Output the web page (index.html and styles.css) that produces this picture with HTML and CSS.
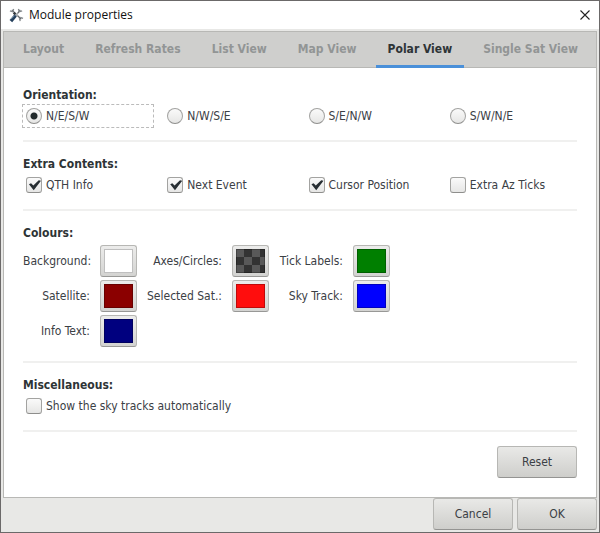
FILE: index.html
```html
<!DOCTYPE html>
<html lang="en">
<head>
<meta charset="utf-8">
<title>Module properties</title>
<link rel="stylesheet" href="styles.css">
</head>
<body>
<div class="window">
  <header class="titlebar">
    <svg class="app-icon" viewBox="0 0 16 16" aria-hidden="true">
      <path d="M3 2l4 4M12 2L9 6M9 8l4 4" stroke="#63676b" stroke-width="1.4" fill="none"/>
      <path d="M1 3l3 1 1-3M10 1l1 3 3-1M11 11l1 3M12 10l3 1" stroke="#83888b" stroke-width="1.3" fill="none"/>
      <path d="M5 5l3 3" stroke="#34383c" stroke-width="2.6"/>
      <path d="M9 6L6 9" stroke="#a9adaf" stroke-width="2"/>
      <path d="M7 8l-5 6" stroke="#243f5c" stroke-width="3.6"/>
      <path d="M6 8l-4 4" stroke="#7493ad" stroke-width="1"/>
    </svg>
    <h1 class="title">Module properties</h1>
    <button class="close" type="button" aria-label="Close">
      <svg viewBox="0 0 10 10" aria-hidden="true"><path d="M0.5 0.5l9 9M9.5 0.5l-9 9" stroke="#222" stroke-width="1.1"/></svg>
    </button>
  </header>

  <main class="notebook">
    <div class="tabs" role="tablist">
      <button class="tab" type="button" role="tab">Layout</button>
      <button class="tab" type="button" role="tab">Refresh Rates</button>
      <button class="tab" type="button" role="tab">List View</button>
      <button class="tab" type="button" role="tab">Map View</button>
      <button class="tab tab-active" type="button" role="tab" aria-selected="true">Polar View</button>
      <button class="tab" type="button" role="tab">Single Sat View</button>
    </div>

    <div class="panel" role="tabpanel">
      <section class="group">
        <h2>Orientation:</h2>
        <div class="options">
          <label class="option option-focus"><input type="radio" name="orientation" checked>N/E/S/W</label>
          <label class="option"><input type="radio" name="orientation">N/W/S/E</label>
          <label class="option"><input type="radio" name="orientation">S/E/N/W</label>
          <label class="option"><input type="radio" name="orientation">S/W/N/E</label>
        </div>
      </section>

      <section class="group">
        <h2>Extra Contents:</h2>
        <div class="options">
          <label class="option"><input type="checkbox" checked>QTH Info</label>
          <label class="option"><input type="checkbox" checked>Next Event</label>
          <label class="option"><input type="checkbox" checked>Cursor Position</label>
          <label class="option"><input type="checkbox">Extra Az Ticks</label>
        </div>
      </section>

      <section class="group">
        <h2>Colours:</h2>
        <div class="colours">
          <label for="background">Background:</label><input class="colour" id="background" type="color" value="#ffffff">
          <label for="axes">Axes/Circles:</label><input class="colour colour-alpha" id="axes" type="color" value="#333333">
          <label for="ticks">Tick Labels:</label><input class="colour" id="ticks" type="color" value="#007f00">
          <label for="satellite">Satellite:</label><input class="colour" id="satellite" type="color" value="#8b0000">
          <label for="selected">Selected Sat.:</label><input class="colour" id="selected" type="color" value="#ff0d0d">
          <label for="track">Sky Track:</label><input class="colour" id="track" type="color" value="#0000ff">
          <label for="info">Info Text:</label><input class="colour" id="info" type="color" value="#00007f">
        </div>
      </section>

      <section class="group">
        <h2>Miscellaneous:</h2>
        <label class="option"><input type="checkbox">Show the sky tracks automatically</label>
      </section>

      <div class="reset-row"><button class="button" type="button">Reset</button></div>
    </div>
  </main>

  <footer class="actions">
    <button class="button" type="button">Cancel</button>
    <button class="button" type="button">OK</button>
  </footer>
</div>
</body>
</html>
```
FILE: styles.css
```css
* {
  box-sizing: border-box;
}

body {
  margin: 0;
  background: #e8e8e6;
  color: #3b4045;
  font: 12px/16px "DejaVu Sans Condensed", "DejaVu Sans", sans-serif;
}

.window {
  display: flex;
  flex-direction: column;
  min-height: 100vh;
  border: 1px solid #6b6969;
  background: #e8e8e6;
}

.titlebar {
  display: flex;
  align-items: center;
  height: 28px;
  padding: 0 9px 0 8px;
  background: #fff;
}

.app-icon {
  width: 15px;
  height: 15px;
}

.title {
  flex: 1;
  margin: 0 0 0 5px;
  color: #111;
  font: 12px/16px "Open Sans", "Noto Sans", sans-serif;
}

.close {
  width: 10px;
  height: 10px;
  padding: 0;
  border: 0;
  background: none;
}

.close svg {
  display: block;
}

.notebook {
  display: flex;
  flex: 1;
  flex-direction: column;
  margin: 2px 2px 0;
  border: 1px solid #b8b8b5;
  background: #fff;
}

.tabs {
  display: flex;
  justify-content: space-between;
  height: 36px;
  padding: 0 6px 0 7px;
  border-bottom: 1px solid #b8b8b5;
  background: #cfcfcd;
}

.tab {
  height: 36px;
  padding: 0 12px;
  border: 0;
  border-bottom: 3px solid transparent;
  background: none;
  color: #929595;
  font: bold 12px/16px "DejaVu Sans Condensed", "DejaVu Sans", sans-serif;
}

.tab-active {
  border-bottom-color: #4a90d9;
  color: #2e3436;
}

.panel {
  padding: 5px 19px 18px;
}

.group {
  padding: 14px 0 13px;
  border-bottom: 2px solid #f0f0ef;
}

h2 {
  margin: 0 0 2px;
  color: #2e3436;
  font-size: 12px;
  line-height: 16px;
}

.options {
  display: grid;
  grid-template-columns: repeat(4, 1fr);
  column-gap: 11px;
}

.option {
  display: flex;
  align-items: center;
  gap: 4px;
  height: 22px;
  padding-left: 3px;
}

.option-focus {
  outline: 1px dashed #bbb;
}

.option input {
  flex: none;
  width: 16px;
  height: 16px;
  margin: 0;
  border: 1px solid #a3a3a1;
  border-bottom-color: #8e8e8c;
  border-radius: 3px;
  appearance: none;
  background: linear-gradient(#fafafa, #e6e6e5);
}

.option input[type="radio"] {
  border-radius: 50%;
}

.option input[type="radio"]:checked {
  background: radial-gradient(circle, #222a2c 0 3px, transparent 4px), linear-gradient(#fafafa, #e6e6e5);
}

.option input[type="checkbox"]:checked::before {
  display: block;
  width: 14px;
  height: 14px;
  background: #272e33;
  clip-path: polygon(14% 44%, 29% 38%, 45% 53%, 84% 16%, 100% 20%, 48% 88%);
  content: "";
}

.colours {
  display: grid;
  grid-template-columns: 67px 37px 75px 37px 64px 37px;
  gap: 3px 10px;
  align-items: center;
  margin: 4px 0 1px;
  text-align: right;
  white-space: nowrap;
}

.colour {
  width: 37px;
  height: 32px;
  padding: 3px;
  border: 1px solid #b7b7b4;
  border-bottom-color: #989896;
  border-radius: 3px;
  appearance: none;
  background: linear-gradient(#ececeb, #d3d3d1);
}

.colour::-webkit-color-swatch-wrapper {
  padding: 0;
}

.colour::-webkit-color-swatch {
  border: 1px solid rgb(0 0 0 / 25%);
  border-radius: 0;
}

.colour-alpha::-webkit-color-swatch {
  background-image: conic-gradient(#333 25%, #595959 0 50%, #333 0 75%, #595959 0);
  background-position: -1px -1px;
  background-size: 16px 16px;
}

.reset-row {
  display: flex;
  justify-content: flex-end;
  padding-top: 14px;
}

.button {
  width: 80px;
  height: 32px;
  padding: 0;
  border: 1px solid #b7b7b4;
  border-bottom-color: #949492;
  border-radius: 3px;
  background: linear-gradient(#e9e9e7, #cececb);
  color: #3b4045;
  font: 12px/16px "DejaVu Sans Condensed", "DejaVu Sans", sans-serif;
}

.actions {
  display: flex;
  justify-content: flex-end;
  gap: 4px;
  padding: 0 2px 2px;
}
```
